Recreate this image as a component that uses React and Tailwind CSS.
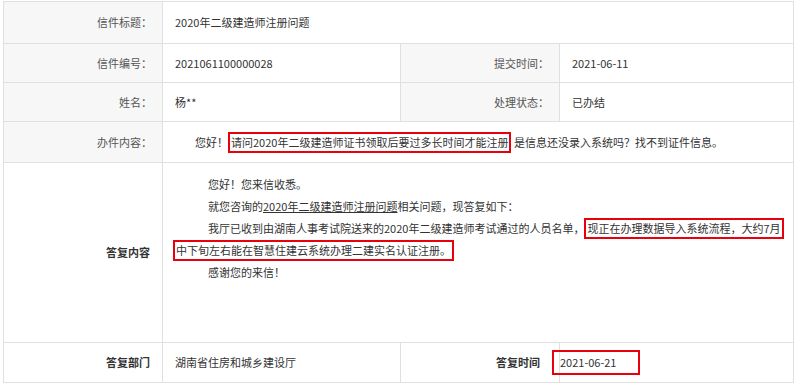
import React from 'react';

const labelCls =
  'bg-[#f7f7f7] border border-[#e0e0e0] text-right pr-[10px] text-[#555] font-normal';
const valueCls = 'border border-[#e0e0e0] pl-[12px] text-[#333]';
const redBox = 'inline-block indent-0 border-2 border-[#e8000b] leading-[17px] px-[1px]';

function App() {
  return (
    <div className="w-[800px] h-[386px] bg-white overflow-hidden font-['Noto_Sans_CJK_SC','Microsoft_YaHei',sans-serif] text-[11px]">
      <table className="mt-[1px] ml-[3px] w-[790px] table-fixed border-collapse border border-[#e0e0e0]">
        <colgroup>
          <col className="w-[159px]" />
          <col className="w-[238px]" />
          <col className="w-[159px]" />
          <col className="w-[234px]" />
        </colgroup>
        <tbody>
          <tr className="h-[42px]">
            <th className={labelCls}>信件标题：</th>
            <td className={valueCls} colSpan={3}>2020年二级建造师注册问题</td>
          </tr>
          <tr className="h-[39px]">
            <th className={labelCls}>信件编号：</th>
            <td className={valueCls}>2021061100000028</td>
            <th className={labelCls}>提交时间：</th>
            <td className={valueCls}>2021-06-11</td>
          </tr>
          <tr className="h-[39px]">
            <th className={labelCls}>姓名：</th>
            <td className={valueCls}>杨**</td>
            <th className={labelCls}>处理状态：</th>
            <td className={valueCls}>已办结</td>
          </tr>
          <tr className="h-[41px]">
            <th className={labelCls}>办件内容：</th>
            <td className={valueCls + ' whitespace-nowrap'} colSpan={3}>
              <span className="pl-[20px]">您好！</span>
              <span className={redBox}>请问2020年二级建造师证书领取后要过多长时间才能注册</span>
              <span> 是信息还没录入系统吗？找不到证件信息。</span>
            </td>
          </tr>
          <tr className="h-[180px]">
            <th className="border border-[#e0e0e0] text-right pr-[12px] font-bold text-[#333]">
              答复内容
            </th>
            <td className={valueCls + ' align-top pt-[10px] pb-[56px]'} colSpan={3}>
              <div className="leading-[22px] whitespace-nowrap">
                <p className="indent-[33px]">您好！您来信收悉。</p>
                <p className="indent-[33px]">
                  就您咨询的<span className="underline">2020年二级建造师注册问题</span>相关问题，现答复如下：
                </p>
                <p className="indent-[33px]">
                  我厅已收到由湖南人事考试院送来的2020年二级建造师考试通过的人员名单，
                  <span className={redBox}>现正在办理数据导入系统流程，大约7月</span>
                  <br />
                  <span className={redBox + ' -ml-[2px]'}>中下旬左右能在智慧住建云系统办理二建实名认证注册。</span>
                </p>
                <p className="indent-[33px]">感谢您的来信！</p>
              </div>
            </td>
          </tr>
          <tr className="h-[40px]">
            <th className="border border-[#e0e0e0] text-right pr-[12px] font-bold text-[#333]">
              答复部门
            </th>
            <td className={valueCls}>湖南省住房和城乡建设厅</td>
            <th className="border border-[#e0e0e0] text-right pr-[19px] font-bold text-[#333]">
              答复时间
            </th>
            <td className="border border-[#e0e0e0] pl-[8px] text-[#333]">
              <span className="inline-block -ml-[16px] border-2 border-[#e8000b] pl-[6px] w-[88px] leading-[21px]">
                2021-06-21
              </span>
            </td>
          </tr>
        </tbody>
      </table>
    </div>
  );
}

export default App;
